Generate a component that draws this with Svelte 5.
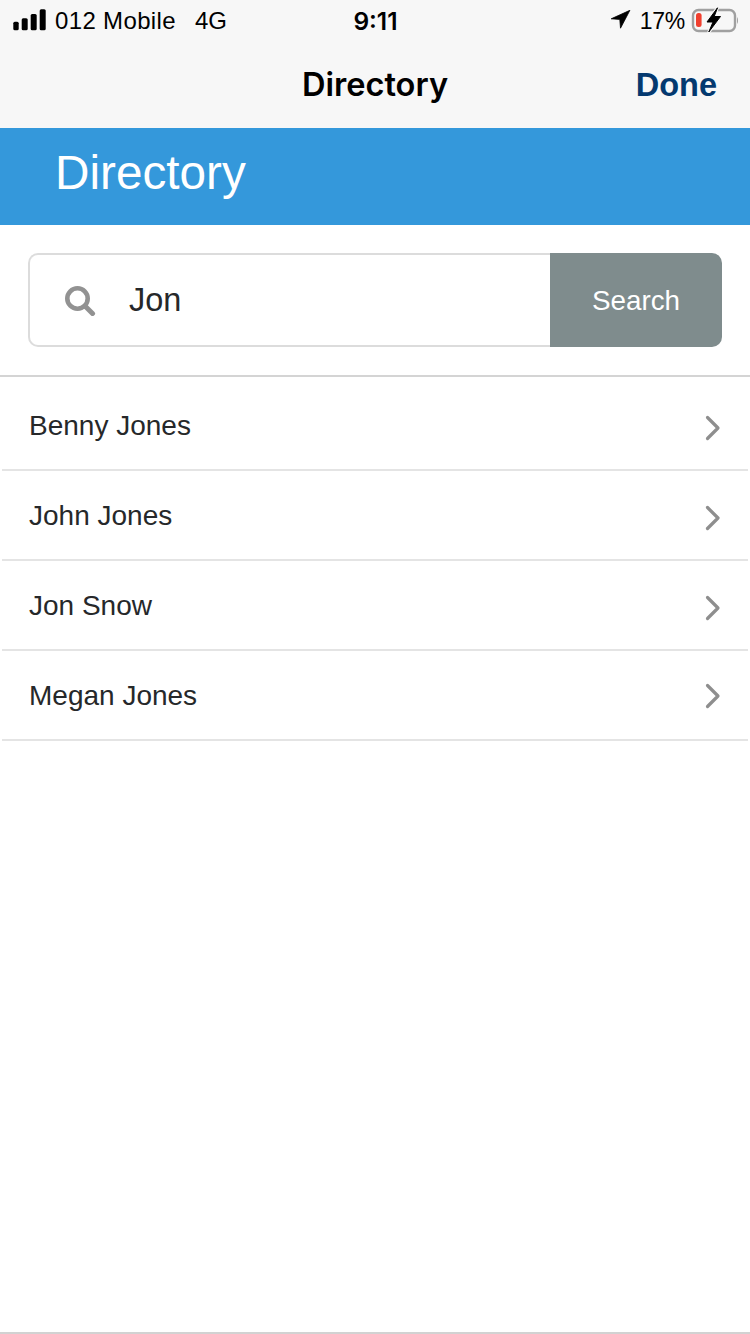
<script>
  const people = ['Benny Jones', 'John Jones', 'Jon Snow', 'Megan Jones'];
</script>

<div class="page">
  <header class="chrome">
    <div class="status">
      <div class="status-left">
        <svg class="signal" width="33" height="22" viewBox="0 0 33 22" aria-hidden="true">
          <rect x="0.3" y="12.7" width="5.4" height="8.5" rx="1.5" />
          <rect x="8.7" y="9.3" width="6" height="11.9" rx="1.5" />
          <rect x="17.7" y="5" width="6" height="16.2" rx="1.5" />
          <rect x="26.7" y="0.3" width="6" height="20.9" rx="1.5" />
        </svg>
        <span class="carrier">012 Mobile</span>
        <span class="net">4G</span>
      </div>
      <span class="clock">9:11</span>
      <div class="status-right">
        <svg class="loc" width="20" height="20" viewBox="0 0 20 20" aria-hidden="true">
          <path d="M18.9 0.3 L0.2 8.8 L8.8 9.4 L9.5 18.2 Z" stroke="#000" stroke-width="0.8" stroke-linejoin="round" />
        </svg>
        <span class="pct">17%</span>
        <svg class="batt" width="48" height="30" viewBox="0 0 48 30" aria-hidden="true">
          <rect x="3" y="4" width="42" height="21" rx="5.5" fill="none" stroke="#a0a0a0" stroke-width="2.4" />
          <rect x="6" y="7" width="5.6" height="14" rx="2.5" fill="#f0402f" />
          <path d="M47 11 C47.7 12 48 13 48 14.5 C48 16 47.7 17 47 18 Z" fill="#a0a0a0" />
          <path d="M27.5 1.8 L17 16 L23 16 L18.8 26 L30.5 10.5 L24.2 10.5 Z" fill="#f7f7f7" stroke="#f7f7f7" stroke-width="3" stroke-linejoin="round" />
          <path d="M27.5 1.8 L17 16 L23 16 L18.8 26 L30.5 10.5 L24.2 10.5 Z" fill="#000" stroke="#000" stroke-width="1" stroke-linejoin="round" />
        </svg>
      </div>
    </div>
    <nav class="navbar">
      <span class="nav-title">Directory</span>
      <span class="done">Done</span>
    </nav>
  </header>

  <section class="banner"><h1>Directory</h1></section>

  <section class="search-wrap">
    <div class="search">
      <div class="field">
        <svg class="glass" width="32" height="32" viewBox="0 0 32 32" aria-hidden="true">
          <circle cx="12.5" cy="14.5" r="10.2" fill="none" stroke="#929292" stroke-width="4.6" />
          <path d="M20.5 22.5 L27.5 29.5" fill="none" stroke="#929292" stroke-width="5" stroke-linecap="round" />
        </svg>
        <span class="query">Jon</span>
      </div>
      <div class="btn">Search</div>
    </div>
  </section>

  <ul class="list">
    {#each people as person}
      <li class="row">
        <span class="name">{person}</span>
        <svg class="chev" width="18" height="26" viewBox="0 0 18 26" aria-hidden="true">
          <path d="M3.5 2.5 L14 13 L3.5 23.5" fill="none" stroke="#8e8e8e" stroke-width="3.2" stroke-linecap="round" stroke-linejoin="round" />
        </svg>
      </li>
    {/each}
  </ul>
</div>

<style>
  :global(body) {
    margin: 0;
    background: #fff;
  }
  .page {
    width: 750px;
    height: 1334px;
    box-sizing: border-box;
    border-bottom: 2px solid #d2d2d2;
    display: flex;
    flex-direction: column;
    overflow: hidden;
    font-family: "Liberation Sans", Arial, sans-serif;
    color: #26282a;
    background: #fff;
  }
  .chrome {
    height: 128px;
    flex: none;
    background: #f7f7f7;
    color: #000;
  }
  .status {
    height: 42px;
    padding: 0 12px 0 13px;
    display: grid;
    grid-template-columns: 1fr auto 1fr;
    align-items: center;
    font-size: 24px;
  }
  .status-left,
  .status-right {
    display: flex;
    align-items: center;
  }
  .status-right {
    justify-content: flex-end;
  }
  .signal {
    fill: #000;
    margin-right: 9px;
    margin-top: -2px;
  }
  .carrier {
    letter-spacing: 0.35px;
    margin-right: 19px;
  }
  .clock {
    font-size: 24.5px;
    font-family: "Inter", "Liberation Sans", sans-serif;
    font-weight: 600;
  }
  .loc {
    fill: #000;
    margin-right: 9px;
    margin-top: -2px;
  }
  .pct {
    font-size: 23px;
    letter-spacing: -0.3px;
    margin-right: 5px;
  }
  .navbar {
    height: 86px;
    box-sizing: border-box;
    padding: 0 33px 0 0;
    display: flex;
    align-items: center;
    justify-content: flex-end;
    position: relative;
  }
  .nav-title {
    position: absolute;
    left: 0;
    right: 0;
    text-align: center;
    font-family: "Inter", "Liberation Sans", sans-serif;
    font-size: 32.6px;
    font-weight: 600;
    top: 22px;
    line-height: 40px;
  }
  .done {
    font-size: 32.5px;
    font-weight: 700;
    color: #04396f;
    line-height: 40px;
    margin-top: -1px;
  }
  .banner {
    height: 97px;
    flex: none;
    background: #3498db;
    box-sizing: border-box;
    padding: 0 0 8px 55px;
    display: flex;
    align-items: center;
  }
  .banner h1 {
    margin: 0;
    color: #fff;
    font-weight: 400;
    font-size: 47.7px;
    line-height: 52px;
  }
  .search-wrap {
    height: 152px;
    flex: none;
    box-sizing: border-box;
    padding: 28px 28px 0;
    border-bottom: 2px solid #d4d4d4;
  }
  .search {
    display: flex;
    height: 94px;
  }
  .field {
    flex: 1;
    box-sizing: border-box;
    border: 2px solid #dcdcdc;
    border-right: none;
    border-radius: 10px 0 0 10px;
    display: flex;
    align-items: center;
    padding-left: 35px;
  }
  .glass {
    flex: none;
    margin-right: 32px;
  }
  .query {
    font-size: 32.5px;
    color: #26282a;
  }
  .btn {
    width: 172px;
    flex: none;
    box-sizing: border-box;
    padding-top: 1px;
    background: #7f8c8d;
    color: #fff;
    border-radius: 0 10px 10px 0;
    font-size: 27.8px;
    display: flex;
    align-items: center;
    justify-content: center;
  }
  .list {
    margin: 0;
    padding: 0 2px;
    list-style: none;
  }
  .row {
    height: 90px;
    box-sizing: border-box;
    border-bottom: 2px solid #e4e4e4;
    display: flex;
    align-items: center;
    justify-content: space-between;
    padding: 0 26px 0 27px;
  }
  .row:first-child {
    height: 94px;
    padding-top: 4px;
  }
  .name {
    font-size: 28px;
    margin-top: 2px;
  }
  .chev {
    flex: none;
    margin-top: 6px;
  }
  .row:last-child .chev {
    margin-top: 2px;
  }
</style>
